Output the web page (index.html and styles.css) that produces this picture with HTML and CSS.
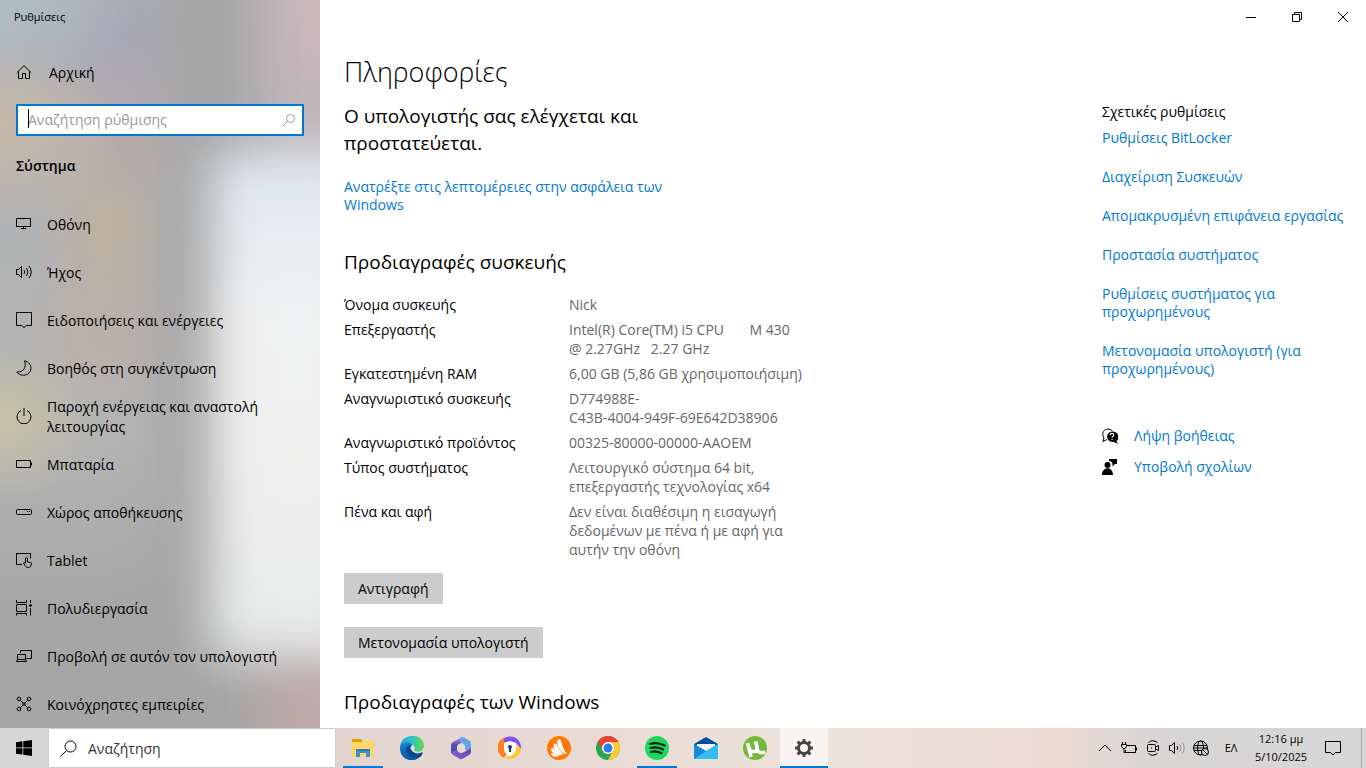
FILE: index.html
```
<!DOCTYPE html>
<html lang="el">
<head>
    <meta charset="UTF-8">
    <meta name="viewport" content="width=device-width, initial-scale=1.0">
    <title>Ρυθμίσεις</title>
    <link rel="stylesheet" href="styles.css">
</head>
<body>
    <div class="window">
        <aside class="sidebar">
            <div class="app-title">Ρυθμίσεις</div>
            <a href="#" class="nav-item home">
                <svg class="icon" viewBox="0 0 16 16"><path d="M.8 8.700 8 1.700l7.200 7M2.500 7.300v7.200h4v-5h3v5h4V7.300"/></svg>
                <span>Αρχική</span>
            </a>
            <div class="search-box">
                <input type="text" aria-label="Αναζήτηση ρύθμισης" placeholder="Αναζήτηση ρύθμισης">
                <span class="caret"></span>
                <svg class="search-icon" viewBox="0 0 14 14"><circle cx="8.500" cy="5.500" r="4"/><path d="M5.500 8.500 1 13"/></svg>
            </div>
            <h2 class="nav-title">Σύστημα</h2>
            <nav>
                <a href="#" class="nav-item">
                    <svg class="icon" viewBox="0 0 16 16"><path d="M.5 2.500h14v8H.5zM7.500 10.500v2M5 12.500h5"/></svg>
                    <span>Οθόνη</span>
                </a>
                <a href="#" class="nav-item">
                    <svg class="icon" viewBox="0 0 16 16"><path d="M.5 5.500h2l3-3v11l-3-3h-2zM8 6q1.500 2 0 4M10.500 4q3 4 0 8M13 2q4.500 6 0 12"/></svg>
                    <span>Ήχος</span>
                </a>
                <a href="#" class="nav-item">
                    <svg class="icon" viewBox="0 0 16 16"><path d="M.5.5h15v13h-5L8 15.500l-2.500-2h-5z"/></svg>
                    <span>Ειδοποιήσεις και ενέργειες</span>
                </a>
                <a href="#" class="nav-item">
                    <svg class="icon" viewBox="0 0 16 16"><path d="M8.500.8C18 3 16.500 15 7.500 15.200 4.500 15.300 2 14 .8 12 7.500 12.500 11 7 8.500.8z"/></svg>
                    <span>Βοηθός στη συγκέντρωση</span>
                </a>
                <a href="#" class="nav-item">
                    <svg class="icon" viewBox="0 0 16 16"><path d="M8 0v8M5 2.500a7 7 0 1 0 6 0"/></svg>
                    <span>Παροχή ενέργειας και αναστολή λειτουργίας</span>
                </a>
                <a href="#" class="nav-item">
                    <svg class="icon" viewBox="0 0 16 16"><path d="M.5 4.500h14v7H.5zM15.500 6.500v3"/></svg>
                    <span>Μπαταρία</span>
                </a>
                <a href="#" class="nav-item">
                    <svg class="icon" viewBox="0 0 16 16"><rect x=".5" y="5.500" width="15" height="5" rx="1"/><path d="M11 7.500h1M13 7.500h1"/></svg>
                    <span>Χώρος αποθήκευσης</span>
                </a>
                <a href="#" class="nav-item">
                    <svg class="icon" viewBox="0 0 16 16"><path d="M6 12.500H.5v-11h14v5M9.500 11V6q1-1.500 2 0v4l3 .5q1 0 1 1c0 5-5 5-6.500 2L7.500 11q1-1 2 .5"/></svg>
                    <span>Tablet</span>
                </a>
                <a href="#" class="nav-item">
                    <svg class="icon" viewBox="0 0 16 16"><path d="M.5 0v2.500h10V0M.5 4.500h10v7H.5zM.5 15.500v-2h10v2M14.500 0v3M14.500 8v7.500"/><circle cx="14.500" cy="5.500" r="1" fill="#000"/></svg>
                    <span>Πολυδιεργασία</span>
                </a>
                <a href="#" class="nav-item">
                    <svg class="icon" viewBox="0 0 16 16"><path d="M4.500 5V2.500h11v8h-5M1.500 6.500h8v5h-8zM1.500 11.500l-1 2h10l-1-2"/></svg>
                    <span>Προβολή σε αυτόν τον υπολογιστή</span>
                </a>
                <a href="#" class="nav-item">
                    <svg class="icon" viewBox="0 0 16 16"><circle cx="3" cy="3" r="1.800"/><circle cx="13" cy="3" r="1.800"/><circle cx="3" cy="13" r="1.800"/><circle cx="13" cy="13" r="1.800"/><circle cx="8" cy="8" r="1.300"/><path d="M4.300 4.300 7 7M11.700 4.300 9 7M4.300 11.700 7 9M11.700 11.700 9 9"/></svg>
                    <span>Κοινόχρηστες εμπειρίες</span>
                </a>
            </nav>
        </aside>

        <div class="content">
            <div class="window-buttons">
                <button type="button" aria-label="Ελαχιστοποίηση"><svg viewBox="0 0 10 10"><path d="M0 5.500h10"/></svg></button>
                <button type="button" aria-label="Επαναφορά"><svg viewBox="0 0 10 10"><path d="M.5 2.500h7v7h-7zM2.500 2.500v-2h7v7h-2"/></svg></button>
                <button type="button" aria-label="Κλείσιμο"><svg viewBox="0 0 10 10"><path d="M0 0l10 10M10 0 0 10"/></svg></button>
            </div>
            <h1>Πληροφορίες</h1>
            <div class="columns">
                <main>
                    <h2>Ο υπολογιστής σας ελέγχεται και προστατεύεται.</h2>
                    <a href="#" class="security-link">Ανατρέξτε στις λεπτομέρειες στην ασφάλεια των Windows</a>

                    <h2>Προδιαγραφές συσκευής</h2>
                    <table>
                        <tr><th>Όνομα συσκευής</th><td>Nick</td></tr>
                        <tr><th>Επεξεργαστής</th><td>Intel(R) Core(TM) i5 CPU       M 430 <br>@ 2.27GHz   2.27 GHz</td></tr>
                        <tr><th>Εγκατεστημένη RAM</th><td>6,00 GB (5,86 GB χρησιμοποιήσιμη)</td></tr>
                        <tr><th>Αναγνωριστικό συσκευής</th><td>D774988E-<br>C43B-4004-949F-69E642D38906</td></tr>
                        <tr><th>Αναγνωριστικό προϊόντος</th><td>00325-80000-00000-AAOEM</td></tr>
                        <tr><th>Τύπος συστήματος</th><td>Λειτουργικό σύστημα 64 bit, επεξεργαστής τεχνολογίας x64</td></tr>
                        <tr><th>Πένα και αφή</th><td>Δεν είναι διαθέσιμη η εισαγωγή δεδομένων με πένα ή με αφή για αυτήν την οθόνη</td></tr>
                    </table>
                    <button type="button" class="btn">Αντιγραφή</button>
                    <button type="button" class="btn btn-rename">Μετονομασία υπολογιστή</button>

                    <h2>Προδιαγραφές των Windows</h2>
                </main>

                <aside class="related">
                    <h3>Σχετικές ρυθμίσεις</h3>
                    <a href="#">Ρυθμίσεις BitLocker</a>
                    <a href="#">Διαχείριση Συσκευών</a>
                    <a href="#">Απομακρυσμένη επιφάνεια εργασίας</a>
                    <a href="#">Προστασία συστήματος</a>
                    <a href="#">Ρυθμίσεις συστήματος για προχωρημένους</a>
                    <a href="#">Μετονομασία υπολογιστή (για προχωρημένους)</a>
                    <div class="help">
                        <a href="#">
                            <svg viewBox="0 0 16 16"><path d="M5 11.500 1 13.500l1-3.500C-1 5 2 1 6 1q3 0 4.500 2" fill="none" stroke="#000"/><path d="M10 3.500c7 0 8 7 4.500 9.500l1.500 3-4-2C4 15 2.500 4.500 10 3.500z"/><path d="M8.300 7c0-2.200 3.500-2.200 3.500 0 0 1.300-1.700 1.300-1.700 2.800M10.100 11v1" fill="none" stroke="#fff" stroke-width="1.200"/></svg>
                            <span>Λήψη βοήθειας</span>
                        </a>
                        <a href="#">
                            <svg viewBox="0 0 16 16"><circle cx="5.500" cy="6" r="3"/><path d="M0 16c0-9 11-9 11 0zM7 0h8v5h-2l-2.500 2.500V5Q10 2 7 2z"/></svg>
                            <span>Υποβολή σχολίων</span>
                        </a>
                    </div>
                </aside>
            </div>
        </div>
    </div>

    <footer class="taskbar">
        <button type="button" class="start" aria-label="Έναρξη"><svg viewBox="0 0 16 16"><path d="M0 2.200 6.500 1.300v6.200H0zM7.300 1.200 16 0v7.500H7.300zM0 8.300h6.500v6.300L0 13.700zM7.300 8.300H16V16l-8.700-1.200z"/></svg></button>
        <div class="task-search">
            <svg viewBox="0 0 17 17"><circle cx="10.500" cy="6.500" r="5.500"/><path d="M6.500 10.500.5 16.500"/></svg>
            <input type="text" aria-label="Αναζήτηση" placeholder="Αναζήτηση">
        </div>
        <div class="apps">
            <button type="button" class="running" aria-label="Εξερεύνηση αρχείων">
                <svg viewBox="0 0 24 24"><path d="M1 3h9l1.500 2H21v5H1z" fill="#e0a100"/><path d="M1 6h10l1.500-1H22.500v16H1z" fill="#ffd767"/><path d="M5 13h14v8h-4v-4H9v4H5z" fill="#3f8fd6"/><path d="M5 13h14v2H5z" fill="#2f75b8"/></svg>
            </button>
            <button type="button" aria-label="Microsoft Edge">
                <svg viewBox="0 0 24 24"><defs><linearGradient id="edgeTop"><stop stop-color="#1aa7e0"/><stop offset=".5" stop-color="#2bc3c8"/><stop offset="1" stop-color="#66dc45"/></linearGradient><linearGradient id="edgeLow" x2="0" y2="1"><stop stop-color="#1684d8"/><stop offset="1" stop-color="#0a57a5"/></linearGradient></defs><path d="M0 11C1-3 23-4 24 9c0 6-5 8-9 6-2-1 0-2-.5-4C13 6 5 5 0 11z" fill="url(#edgeTop)"/><path d="M0 12c0-6 10-8 13-3-9 1-7 11 1 12 3 .3 5-.5 8-2C15 28 0 25 0 12z" fill="url(#edgeLow)"/><path d="M6 14c0-3 3-5.500 6-5-2 2-2 4 0 6 3 3 7 3 10.500 1 0 1 0 2-1 3.500C15 26 6 21 6 14z" fill="#0b4a8e"/><path d="M11 11c1-2 4-1 3.500 1.500 0 1-1 1.500-.5 2.200-2 0-4-1.700-3-3.700z" fill="#e6dad5"/></svg>
            </button>
            <button type="button" aria-label="Microsoft 365">
                <svg viewBox="0 0 24 24"><defs><linearGradient id="mA" x2="0" y2="1"><stop stop-color="#a08fe6"/><stop offset=".5" stop-color="#5f4ab0"/><stop offset="1" stop-color="#304da8"/></linearGradient><linearGradient id="mB"><stop stop-color="#8a5fd0"/><stop offset="1" stop-color="#6a4ab8"/></linearGradient></defs><path d="M14 1 4 6q-2 1-2 3v8l6 1V11q0-2 2-3l5-2z" fill="url(#mA)"/><path d="M11 1.500q2-1 4 0l5 3q2 1 2 3v8l-6-2v-3q0-2-2-3l-3-1z" fill="#62a5e6"/><path d="M2 16l6-2q1 2 3 3 2 .5 4-1l7-4v4q0 2-2 3l-6 3.500q-2 1-4 0l-6-3.500q-2-1-2-3z" fill="url(#mB)"/><circle cx="12" cy="12" r="4" fill="#e7dad4"/></svg>
            </button>
            <button type="button" aria-label="Avast Secure Browser">
                <svg viewBox="0 0 24 24"><path d="M12 1A11 11 0 0 0 6 22l6-9z" fill="#ff8125"/><path d="M6 2.500C14-3 24 3 23 13l-5-6-12-1z" fill="#8154f5"/><path d="M23 12c0 9-9 13-17 10l7-2 5-10z" fill="#ffc72b"/><path d="M12 5l6 2v5q0 6-6 8-6-2-6-8V7z" fill="#fff"/><circle cx="12" cy="11" r="2" fill="#263963"/><path d="M11 12h2v4h-2z" fill="#263963"/></svg>
            </button>
            <button type="button" aria-label="Avast Antivirus">
                <svg viewBox="0 0 24 24"><circle cx="12" cy="12" r="12" fill="#ff7800"/><path d="M10.500 4.500c1-2 3-1.500 3.500.5 1 5 3 9 6 13-6-1-11-8-9.500-13.500zM6.500 8.500c1-1.500 2.800-1 3.300.5 1.500 4 4 7 8 9.500-6 0-12-4.500-11.300-10zM3.800 13c1-1.500 2.500-1 3.400.2 2 2.500 4.500 4.300 8.500 5.600C10 20 4.500 17.500 3.800 13zM4 18c1-1 2-.7 3 0 1.700 1 3.500 1.300 6 1.500-4 2-8 1.500-9-1.500z" fill="#fff"/></svg>
            </button>
            <button type="button" aria-label="Google Chrome">
                <svg viewBox="0 0 24 24"><circle cx="12" cy="12" r="12" fill="#2da44e"/><path d="M1.600 6A12 12 0 0 1 22.400 6L12 7 8 14z" fill="#e94235"/><path d="M12 6h10.400A12 12 0 0 1 12 24l5-9z" fill="#fcc934"/><circle cx="12" cy="12" r="6" fill="#fff"/><circle cx="12" cy="12" r="4.500" fill="#317af0"/></svg>
            </button>
            <button type="button" class="running" aria-label="Spotify">
                <svg viewBox="0 0 24 24"><circle cx="12" cy="12" r="12" fill="#1ed760"/><path d="M5 8q7.500-2.500 14.500 1.500M5.500 12q6.500-2 12.500 1.500M6 16q5-1.500 10.500 1.300" fill="none" stroke="#0a2010" stroke-width="2.200" stroke-linecap="round"/></svg>
            </button>
            <button type="button" aria-label="Αλληλογραφία">
                <svg viewBox="0 0 24 24"><path d="M0 8 12 1l12 7v5H0z" fill="#084b9d"/><path d="M3 8h18v7H3z" fill="#f5f5f5"/><path d="M0 8l12 7 12-7v15H0z" fill="#26a8ee"/><path d="M0 23 24 8v15z" fill="#32bdf4"/><path d="M0 8l12 7L0 23z" fill="#1689dc"/></svg>
            </button>
            <button type="button" aria-label="µTorrent">
                <svg viewBox="0 0 24 24"><circle cx="12" cy="12" r="12" fill="#76b83f"/><path d="M4.500 7 8 21M5.500 10c1.500 8 9 7 8.500 1L12.500 5.500M14 12c1 5 4 5.500 8 4" fill="none" stroke="#fff" stroke-width="3.500"/></svg>
            </button>
            <button type="button" class="running active" aria-label="Ρυθμίσεις">
                <svg viewBox="0 0 24 24" fill="none" stroke="#464646"><circle cx="12" cy="12" r="5.500" stroke-width="3"/><g stroke-width="3"><path d="M12 3v3M12 18v3M3 12h3M18 12h3M5.600 5.600l2.200 2.200M16.200 16.200l2.200 2.200M5.600 18.400l2.200-2.200M16.200 7.800l2.200-2.200"/></g></svg>
            </button>
        </div>
        <div class="tray">
            <svg viewBox="0 0 16 16"><path d="M2 11l6-6 6 6"/></svg>
            <svg viewBox="0 0 16 16"><path d="M6 5.500h8.500v7H4.500V10M15.500 7.500v3M1.500 2v2M4.500 2v2M.5 4.500h5v2l-1.500 2H2l-1.500-2zM3 8.500v4h2"/></svg>
            <svg viewBox="0 0 16 16"><rect x="2.500" y="4.500" width="8" height="7" rx="1"/><path d="M10.500 7l3-1.500v5l-3-1.500M3.500 2.500q4-3.500 9 0M3.500 13.500q4 3.500 9 0M6.500 7.500v1"/></svg>
            <svg viewBox="0 0 16 16"><path d="M.5 5.500h2l3-3v11l-3-3h-2zM8 6q1.500 2 0 4"/><path d="M10.500 4q3 4 0 8M13 2q4.500 6 0 12" stroke="#999"/></svg>
            <svg viewBox="0 0 16 16"><circle cx="7.500" cy="8" r="7"/><ellipse cx="7.500" cy="8" rx="3" ry="7"/><path d="M1 5.500h13M1 10.500h8M.5 8h14"/><circle cx="12" cy="12" r="3.500" fill="#d6d6d6"/><path d="M9.500 9.500l5 5"/></svg>
            <span class="lang">ΕΛ</span>
            <div class="clock">12:16 μμ<br>5/10/2025</div>
            <svg class="notify" viewBox="0 0 16 16"><path d="M.5 1.500h15v11h-5L8 15l-2.500-2.500h-5z"/></svg>
        </div>
    </footer>
</body>
</html>
```
FILE: styles.css
```
* {
    box-sizing: border-box;
}
body {
    margin: 0;
    height: 100vh;
    display: flex;
    flex-direction: column;
    overflow: hidden;
    font-family: "Open Sans", "Noto Sans", sans-serif;
    font-size: 14px;
    line-height: 19px;
    color: #000;
}
a {
    color: #0078d7;
    text-decoration: none;
}
h1, h2, h3 {
    margin: 0;
    font-weight: 400;
}
button, input {
    font: inherit;
    border: none;
    padding: 0;
}
svg {
    flex-shrink: 0;
}
.window {
    flex: 1;
    min-height: 0;
    display: flex;
    overflow: hidden;
}

/* Sidebar */
.sidebar {
    position: relative;
    isolation: isolate;
    overflow: hidden;
    width: 320px;
    flex-shrink: 0;
    background:
        radial-gradient(ellipse 110px 230px at 100% 0, #c9b7bc 20%, rgba(201, 183, 188, 0) 100%),
        radial-gradient(ellipse 130px 130px at 100% 100%, #bfa8a9 20%, rgba(191, 168, 169, 0) 100%),
        radial-gradient(ellipse 140px 90px at 0 0, #afbec6, rgba(175, 190, 198, 0) 100%),
        radial-gradient(ellipse 110px 90px at 120px 30px, #a7a6b7, rgba(167, 166, 183, 0) 100%),
        radial-gradient(ellipse 130px 100px at 0 125px, #c7b9a8, rgba(199, 185, 168, 0) 100%),
        radial-gradient(ellipse 90px 90px at 130px 120px, #b7a7a7, rgba(183, 167, 167, 0) 100%),
        radial-gradient(ellipse 75px 110px at 110px 225px, #beb09e, rgba(190, 176, 158, 0) 100%),
        radial-gradient(ellipse 100px 80px at 0 420px, #c7c3a6, rgba(199, 195, 166, 0) 100%),
        radial-gradient(ellipse 90px 90px at 110px 330px, #bbafa7, rgba(187, 174, 167, 0) 100%),
        linear-gradient(#aeb0b2, #b3b3b3 60%, #a6a6a6 85%);
}
.sidebar::before,
.sidebar::after {
    content: "";
    position: absolute;
    z-index: -1;
    filter: blur(24px);
}
.sidebar::before {
    top: -40px;
    bottom: -40px;
    left: 168px;
    width: 80px;
    background: #a5a5a5;
}
.sidebar::after {
    top: 150px;
    bottom: 70px;
    left: 212px;
    right: -60px;
    background: linear-gradient(#dfe6ee, #f0f1f2 30%, #f0f0ef 60%, #e8eaeb);
}
.app-title {
    height: 49px;
    padding: 7px 14px;
    font-size: 11px;
}
.nav-item {
    display: flex;
    align-items: center;
    gap: 15px;
    height: 48px;
    padding: 0 40px 0 16px;
    line-height: 20px;
    color: #000;
}
.nav-item.home {
    gap: 17px;
}
.icon {
    width: 16px;
    height: 16px;
    margin-bottom: 2px;
    fill: none;
    stroke: #000;
}
.search-box {
    position: relative;
    height: 32px;
    margin: 7px 16px 0;
}
.search-box input {
    width: 100%;
    height: 32px;
    padding: 0 32px 2px 10px;
    border: 2px solid #0078d7;
    background: #fff;
    outline: none;
}
.search-box input::placeholder {
    color: #999;
}
.caret {
    position: absolute;
    left: 12px;
    top: 5px;
    width: 1px;
    height: 19px;
    background: #000;
}
.search-icon {
    position: absolute;
    right: 8px;
    top: 9px;
    width: 14px;
    height: 14px;
    fill: none;
    stroke: #999;
}
.nav-title {
    height: 65px;
    padding: 20px 16px 0;
    font-size: 14px;
    font-weight: 600;
}

/* Content */
.content {
    flex: 1;
    padding: 0 16px 0 24px;
    background: #fff;
}
.window-buttons {
    display: flex;
    justify-content: flex-end;
    height: 32px;
    margin-right: -16px;
}
.window-buttons button {
    width: 46px;
    background: none;
}
.window-buttons svg {
    width: 10px;
    height: 10px;
    fill: none;
    stroke: #000;
}
h1 {
    margin: 20px 0 11px;
    font-size: 27px;
    font-weight: 300;
    line-height: 40px;
}
.columns {
    display: flex;
    justify-content: space-between;
}
main {
    width: 466px;
}
main h2 {
    max-width: 340px;
    font-size: 19px;
    line-height: 27px;
}
.security-link {
    display: block;
    max-width: 340px;
    margin: 21px 0 35px;
    line-height: 18px;
}
table {
    width: 100%;
    margin: 16px 0 11px;
    border-collapse: collapse;
}
th, td {
    padding: 3px 0;
    text-align: left;
    vertical-align: top;
    font-weight: 400;
}
th {
    width: 225px;
}
td {
    color: #666;
    white-space: pre-wrap;
}
.btn {
    display: block;
    height: 31px;
    padding: 0 14px;
    background: #ccc;
    color: #000;
}
.btn-rename {
    margin: 23px 0 31px;
}
.related {
    width: 248px;
}
.related h3 {
    margin-bottom: 8px;
    font-size: 14px;
    line-height: 18px;
}
.related > a {
    display: block;
    margin-bottom: 21px;
    line-height: 18px;
}
.help {
    margin-top: 48px;
}
.help a {
    display: flex;
    align-items: center;
    gap: 16px;
    margin-bottom: 12px;
}
.help svg {
    width: 16px;
    height: 16px;
}

/* Taskbar */
.taskbar {
    display: flex;
    height: 40px;
    flex-shrink: 0;
    background: linear-gradient(90deg, #d6d6d6 0, #d6d6d6 16%, #e2d5d0 25%, #e9dcd5 45%, #ede3db 60%, #ecdad3 78%, #d8d5d4 84%, #d6d6d6 100%);
}
.taskbar button {
    width: 48px;
    background: none;
}
.start svg {
    width: 16px;
    height: 16px;
    display: block;
    margin: 0 auto;
}
.task-search {
    display: flex;
    align-items: center;
    gap: 11px;
    width: 288px;
    padding: 0 11px;
    border: 1px solid #ccc;
    background: #fff;
}
.task-search svg {
    width: 17px;
    height: 17px;
    fill: none;
    stroke: #000;
}
.task-search input {
    flex: 1;
    min-width: 0;
}
.task-search input::placeholder {
    color: #333;
}
.apps {
    display: flex;
    gap: 1px;
    margin-left: 3px;
}
.apps button {
    display: flex;
    align-items: center;
    justify-content: center;
    position: relative;
}
.apps svg {
    width: 24px;
    height: 24px;
}
.running::after {
    content: "";
    position: absolute;
    left: 4px;
    right: 4px;
    bottom: 0;
    height: 2px;
    background: #0078d7;
}
.apps .active {
    background: #f8f3f0;
}
.active::after {
    left: 0;
    right: 0;
}
.tray {
    display: flex;
    align-items: center;
    gap: 8px;
    margin-left: auto;
    margin-right: 4px;
    padding-right: 20px;
    border-right: 1px solid #aaa;
    font-size: 11px;
    line-height: 18px;
}
.tray svg {
    width: 16px;
    height: 16px;
    fill: none;
    stroke: #000;
}
.lang {
    width: 28px;
    text-align: center;
}
.clock {
    width: 56px;
    text-align: center;
    white-space: nowrap;
}
.tray .notify {
    margin-left: 8px;
}
```
